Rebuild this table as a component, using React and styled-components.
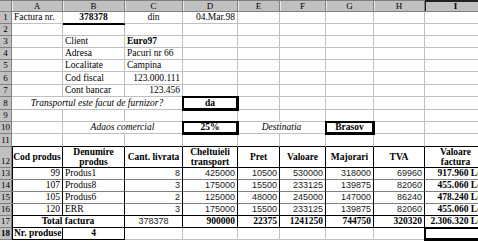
import React from 'react';
import styled, { createGlobalStyle, css } from 'styled-components';

const GRID = '#c0c0c0';
const INNER = '#808080';
const INK = '#000';

const COL_WIDTHS = [51, 62, 58, 55, 42, 46, 48, 51, 62];
const ROW_HEIGHTS = [12, 12, 12, 12, 12, 13, 12, 13, 12, 12, 13, 21, 12, 12, 12, 12, 12, 12];
const LETTERS = ['A', 'B', 'C', 'D', 'E', 'F', 'G', 'H', 'I'];
const ACTIVE = { col: 'I', row: 18 };

const GlobalStyle = createGlobalStyle`
  html, body {
    margin: 0;
    padding: 0;
    background: #fff;
  }
  body {
    overflow: hidden;
  }
`;

const Sheet = styled.div`
  display: grid;
  grid-template-columns: 12px ${COL_WIDTHS.map((w) => `${w}px`).join(' ')};
  grid-template-rows: 12px ${ROW_HEIGHTS.map((h) => `${h}px`).join(' ')};
  width: 478px;
  height: 241px;
  overflow: hidden;
  background: #fff;
  color: #000;
  font-family: "Liberation Serif", "Times New Roman", serif;
`;

const Corner = styled.div`
  background: #c0c0c0;
  border-top: 1px solid #808080;
  border-right: 1px solid #808080;
  border-bottom: 1px solid #808080;
`;

const ColHeader = styled.div`
  display: flex;
  align-items: center;
  justify-content: center;
  background: #c0c0c0;
  border-top: 1px solid #808080;
  border-right: 1px solid #808080;
  border-bottom: 1px solid #808080;
  box-shadow: inset 1px 0 0 #e8e8e8;
  font-size: 9px;
  line-height: 9px;
  ${(p) =>
    p.$active &&
    css`
      border-top: 2px solid #202020;
      box-shadow: inset 1px 0 0 #202020;
      font-weight: 700;
    `}
`;

const RowHeader = styled.div`
  display: flex;
  align-items: flex-end;
  justify-content: center;
  padding-bottom: 1px;
  background: #c0c0c0;
  border-right: 1px solid #808080;
  border-bottom: 1px solid #808080;
  font-size: 9px;
  line-height: 9px;
  font-weight: ${(p) => (p.$active ? 700 : 400)};
`;

const justify = { left: 'flex-start', center: 'center', right: 'flex-end' };

const Cell = styled.div`
  grid-column: span ${(p) => p.$span};
  display: flex;
  align-items: ${(p) => (p.$middle ? 'center' : 'flex-end')};
  justify-content: ${(p) => justify[p.$align]};
  padding: 0 2px 1px;
  min-width: 0;
  white-space: pre;
  text-align: ${(p) => p.$align};
  font-family: ${(p) => (p.$sans ? '"Liberation Sans", Arial, sans-serif' : 'inherit')};
  font-size: ${(p) => (p.$sans ? '9px' : '9.5px')};
  line-height: 10px;
  font-weight: ${(p) => (p.$bold ? 700 : 400)};
  font-style: ${(p) => (p.$italic ? 'italic' : 'normal')};
  color: ${(p) => (p.$sans ? '#1a1a1a' : '#000')};
  border-right: 1px solid ${(p) => p.$right};
  border-bottom: 1px solid ${(p) => p.$bottom};
  ${(p) => p.$left && css`box-shadow: inset 1px 0 0 ${p.$left};`}
  ${(p) =>
    p.$under &&
    css`
      position: relative;
      z-index: 1;
      box-shadow: 0 1px 0 ${INK};
    `}
  ${(p) =>
    p.$box &&
    css`
      position: relative;
      z-index: 2;
      border-color: ${INK};
      box-shadow: 0 0 0 1px ${INK}, inset 0 0 0 1px ${INK};
    `}
`;

// Sheet contents, row by row; columns not listed are blank cells.
const num = (col, text, extra = {}) => ({ col, text, align: 'right', sans: true, ...extra });
const bold = (col, text, extra = {}) => ({ col, text, align: 'right', bold: true, ...extra });

const productRow = (n, code, name, qty, transport, price, value, markup, vat, total) => ({
  n,
  cells: [
    { col: 'A', text: code, align: 'right' },
    { col: 'B', text: name },
    num('C', qty),
    num('D', transport),
    num('E', price),
    num('F', value),
    num('G', markup),
    num('H', vat),
    bold('I', total),
  ],
});

const SHEET = [
  {
    n: 1,
    cells: [
      { col: 'A', text: 'Factura nr.' },
      { col: 'B', text: '378378', bold: true, align: 'center', under: true },
      { col: 'C', text: 'din', align: 'center' },
      { col: 'D', text: '04.Mar.98', align: 'right' },
    ],
  },
  { n: 2, cells: [] },
  { n: 3, cells: [{ col: 'B', text: 'Client' }, { col: 'C', text: 'Euro97', bold: true }] },
  { n: 4, cells: [{ col: 'B', text: 'Adresa' }, { col: 'C', text: 'Pacuri nr 66' }] },
  { n: 5, cells: [{ col: 'B', text: 'Localitate' }, { col: 'C', text: 'Campina' }] },
  { n: 6, cells: [{ col: 'B', text: 'Cod fiscal' }, { col: 'C', text: '123.000.111', align: 'right' }] },
  { n: 7, cells: [{ col: 'B', text: 'Cont bancar' }, { col: 'C', text: '123.456', align: 'right' }] },
  {
    n: 8,
    cells: [
      { col: 'A', span: 3, text: 'Transportul este facut de furnizor?', italic: true, align: 'center' },
      { col: 'D', text: 'da', bold: true, align: 'center', box: true },
    ],
  },
  { n: 9, cells: [] },
  {
    n: 10,
    cells: [
      { col: 'B', span: 2, text: 'Adaos comercial', italic: true, align: 'center' },
      { col: 'D', text: '25%', bold: true, align: 'center', box: true },
      { col: 'E', span: 2, text: 'Destinatia', italic: true, align: 'center' },
      { col: 'G', text: 'Brasov', bold: true, align: 'center', box: true },
    ],
  },
  { n: 11, cells: [] },
  {
    n: 12,
    cells: [
      ['A', 'Cod produs'],
      ['B', 'Denumire\nprodus'],
      ['C', 'Cant. livrata'],
      ['D', 'Cheltuieli\ntransport'],
      ['E', 'Pret'],
      ['F', 'Valoare'],
      ['G', 'Majorari'],
      ['H', 'TVA'],
      ['I', 'Valoare\nfactura'],
    ].map(([col, text]) => ({ col, text, bold: true, align: 'center', middle: true })),
  },
  productRow(13, '99', 'Produs1', '8', '425000', '10500', '530000', '318000', '69960', '917.960 Lei'),
  productRow(14, '107', 'Produs8', '3', '175000', '15500', '233125', '139875', '82060', '455.060 Lei'),
  productRow(15, '105', 'Produs6', '2', '125000', '48000', '245000', '147000', '86240', '478.240 Lei'),
  productRow(16, '120', 'ERR', '3', '175000', '15500', '233125', '139875', '82060', '455.060 Lei'),
  {
    n: 17,
    cells: [
      { col: 'A', span: 2, text: 'Total factura', bold: true, align: 'center' },
      { col: 'C', text: '378378', align: 'center', sans: true },
      bold('D', '900000'),
      bold('E', '22375'),
      bold('F', '1241250'),
      bold('G', '744750'),
      bold('H', '320320'),
      bold('I', '2.306.320 Lei'),
    ],
  },
  {
    n: 18,
    cells: [
      { col: 'A', text: 'Nr. produse', bold: true },
      { col: 'B', text: '4', bold: true, align: 'center' },
    ],
  },
];

// Ruling of a cell: light gridlines, black rules around the invoice table.
function rules(row, first, last) {
  const inTable = row >= 12 && row <= 17;
  const inCount = row === 18 && last <= 1;
  let bottom = GRID;
  if (row === 11 || row === 12 || row === 16 || row === 17 || inCount) bottom = INK;
  else if (row >= 13 && row <= 15) bottom = INNER;
  else if (row === 1 && first === 1) bottom = INK;
  return {
    right: inTable || inCount ? INK : GRID,
    bottom,
    left: (inTable || row === 18) && first === 0 ? INK : null,
  };
}

function SheetRow({ n, cells }) {
  const out = [];
  let c = 0;
  while (c < LETTERS.length) {
    const spec = cells.find((s) => s.col === LETTERS[c]);
    const span = spec?.span ?? 1;
    const r = rules(n, c, c + span - 1);
    const isActive = ACTIVE.row === n && ACTIVE.col === LETTERS[c];
    out.push(
      <Cell
        key={`${n}-${LETTERS[c]}`}
        $span={span}
        $align={spec?.align ?? 'left'}
        $bold={spec?.bold}
        $italic={spec?.italic}
        $sans={spec?.sans}
        $middle={spec?.middle}
        $under={spec?.under}
        $box={spec?.box || isActive}
        $right={r.right}
        $bottom={r.bottom}
        $left={r.left}
      >
        {spec?.text ?? ''}
      </Cell>
    );
    c += span;
  }
  return (
    <>
      <RowHeader $active={ACTIVE.row === n}>{n}</RowHeader>
      {out}
    </>
  );
}

export default function App() {
  return (
    <>
      <GlobalStyle />
      <Sheet>
        <Corner />
        {LETTERS.map((l) => (
          <ColHeader key={l} $active={ACTIVE.col === l}>
            {l}
          </ColHeader>
        ))}
        {SHEET.map((row) => (
          <SheetRow key={row.n} n={row.n} cells={row.cells} />
        ))}
      </Sheet>
    </>
  );
}
